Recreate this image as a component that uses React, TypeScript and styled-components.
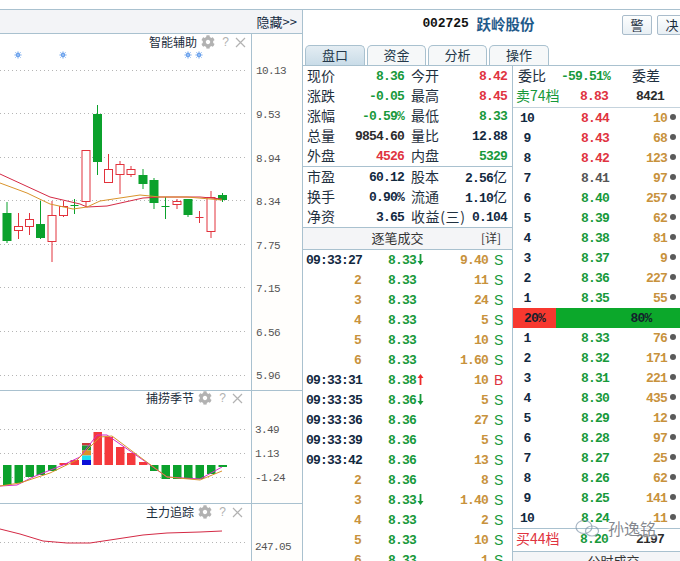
import React from "react";
import styled, { createGlobalStyle } from "styled-components";
import { FaCog } from "react-icons/fa";

const LINE = "#a9c1cf";
const GREEN = "#17993a";
const RED = "#e03340";
const ORANGE = "#c8923c";
const NAVY = "#12293f";
const CJK = `"Noto Sans CJK SC", "Liberation Sans", sans-serif`;
const NUM = `"Liberation Mono", "DejaVu Sans Mono", monospace`;

const tones: Record<string, string> = { green: GREEN, red: RED, orange: ORANGE, navy: NAVY, grey: "#555", dark: "#2b2b2b" };
type Tone = keyof typeof tones;

const GlobalStyle = createGlobalStyle`
  html, body { margin: 0; padding: 0; background: #fff; overflow: hidden; }
`;

const Page = styled.div`
  width: 680px;
  height: 561px;
  padding-top: 9px;
  box-sizing: border-box;
  overflow: hidden;
  position: relative;
  background: #fff;
  font-family: ${CJK};
  color: ${NAVY};
`;

const Frame = styled.div`
  display: flex;
  height: 552px;
  border-top: 1px solid ${LINE};
`;

const ChartColumn = styled.div`
  width: 302px;
  flex: none;
  display: flex;
  flex-direction: column;
`;

const Toolbar = styled.div`
  height: 23px;
  flex: none;
  display: flex;
  align-items: center;
  justify-content: flex-end;
  padding-right: 5px;
  background: #f3f4f7;
  border-bottom: 1px solid ${LINE};
  font-size: 13px;
  line-height: 23px;
`;

const Pane = styled.div<{ $height: number }>`
  height: ${({ $height }) => $height}px;
  flex: none;
  display: flex;
  border-bottom: 1px solid ${LINE};
  &:last-child { border-bottom: none; }
`;

const Canvas = styled.div`
  width: 251px;
  flex: none;
  position: relative;
  svg { display: block; }
`;

const Gutter = styled.div`
  flex: 1;
  position: relative;
  border-left: 1px solid ${LINE};
  background: #fffefc;
`;

const AxisLabel = styled.span<{ $top: number; $left: number }>`
  position: absolute;
  top: ${({ $top }) => $top}px;
  left: ${({ $left }) => $left}px;
  font: 11px/14px ${NUM};
  letter-spacing: -0.6px;
  color: #555;
`;

const PaneTitle = styled.div<{ $right: number; $top: number }>`
  position: absolute;
  top: ${({ $top }) => $top}px;
  right: ${({ $right }) => $right}px;
  display: flex;
  align-items: center;
  height: 16px;
  font-size: 12px;
  line-height: 16px;
  color: #1a2c3c;
`;

const PaneIcons = styled.span`
  display: flex;
  align-items: center;
  margin-left: 4px;
  gap: 5px;
  color: #b2b2b2;
`;

const Help = styled.span`
  width: 9px;
  text-align: center;
  font: 12px/16px "Liberation Sans", sans-serif;
  margin-left: 1px;
`;

const QuoteColumn = styled.div`
  flex: 1;
  min-width: 0;
  display: flex;
  flex-direction: column;
  border-left: 1px solid ${LINE};
`;

const QuoteHeader = styled.div`
  height: 35px;
  flex: none;
  display: flex;
  align-items: flex-start;
  white-space: nowrap;
`;

const StockTitle = styled.div`
  width: 319px;
  box-sizing: border-box;
  padding-left: 32px;
  flex: none;
  height: 28px;
  display: flex;
  align-items: center;
  justify-content: center;
  gap: 8px;
  font-weight: 700;
`;

const StockCode = styled.span`
  font: 700 13px/28px ${NUM};
  letter-spacing: -0.1px;
  color: #111;
`;

const StockName = styled.span`
  font-size: 14.5px;
  line-height: 28px;
  color: #1f5a8a;
`;

const HeaderButton = styled.button`
  width: 30px;
  height: 20px;
  flex: none;
  margin: 5px 5px 0 0;
  padding: 0;
  border: 1px solid #a9bccb;
  border-radius: 2px;
  background: linear-gradient(#fdfefe, #e8eff4);
  font: 13px/18px ${CJK};
  color: #1a2c3c;
`;

const Tabs = styled.div`
  height: 20px;
  flex: none;
  display: flex;
  align-items: flex-end;
  gap: 2px;
  padding-left: 2px;
  border-bottom: 1px solid ${LINE};
`;

const Tab = styled.div<{ $active?: boolean; $width: number }>`
  width: ${({ $width }) => $width}px;
  height: 20px;
  box-sizing: border-box;
  border: 1px solid ${LINE};
  border-bottom: none;
  border-radius: 5px 5px 0 0;
  background: ${({ $active }) => ($active ? "linear-gradient(#e4edf3, #c9dce8)" : "#f6f8f9")};
  text-align: center;
  font-size: 13px;
  line-height: 17px;
  color: #24384a;
`;

const QuoteBody = styled.div`
  flex: 1;
  min-height: 0;
  display: flex;
`;

const TradePanel = styled.div`
  width: 209px;
  flex: none;
  display: flex;
  flex-direction: column;
  overflow: hidden;
  border-right: 1px solid ${LINE};
`;

const StatGroup = styled.div`
  flex: none;
  border-bottom: 1px solid ${LINE};
`;

const StatRow = styled.div`
  display: grid;
  grid-template-columns: 97px 96px;
  column-gap: 7px;
  height: 20px;
  padding-left: 4px;
`;

const StatCell = styled.div`
  display: flex;
  justify-content: space-between;
  white-space: nowrap;
`;

const Label = styled.span`
  font-size: 14px;
  line-height: 18px;
  color: #1f3040;
`;

const WideLabel = styled(Label)`
  letter-spacing: 0.6px;
`;

const Num = styled.span<{ $tone?: Tone }>`
  font: 700 13px/21px ${NUM};
  letter-spacing: -0.8px;
  color: ${({ $tone = "navy" }) => tones[$tone]};
`;

const Unit = styled.span`
  font: 400 14px/18px ${CJK};
  letter-spacing: 0;
`;

const SectionBar = styled.div`
  height: 22px;
  flex: none;
  box-sizing: border-box;
  position: relative;
  display: flex;
  justify-content: center;
  padding-right: 20px;
  background: #f4f5f7;
  border-bottom: 1px solid ${LINE};
  font-size: 13px;
  line-height: 19px;
  color: #333;
`;

const DetailLink = styled.span`
  position: absolute;
  right: 11px;
  top: 0;
  font-size: 12px;
`;

const TradeRow = styled.div`
  display: grid;
  grid-template-columns: 55px 54px 15px 58px 1fr;
  height: 20px;
  flex: none;
  padding-left: 3px;
`;

const TradeTime = styled(Num)`
  text-align: right;
`;

const TradePrice = styled(Num)`
  padding-left: 27px;
`;

const TradeVolume = styled(Num)`
  text-align: right;
`;

const ArrowCell = styled.span`
  display: flex;
  align-items: center;
  padding: 0 0 2px 2px;
`;

const Flag = styled.span<{ $tone: Tone }>`
  padding-left: 6px;
  font: 400 14px/20px "Liberation Sans", sans-serif;
  color: ${({ $tone }) => tones[$tone]};
`;

const BookPanel = styled.div`
  flex: 1;
  min-width: 0;
  display: flex;
  flex-direction: column;
  overflow: hidden;
`;

const BookSummary = styled.div<{ $columns: string }>`
  display: grid;
  grid-template-columns: ${({ $columns }) => $columns};
  height: 20px;
  flex: none;
  white-space: nowrap;
`;

const LevelName = styled.span<{ $tone: Tone }>`
  font-size: 14px;
  line-height: 18px;
  padding-left: 3px;
  color: ${({ $tone }) => tones[$tone]};
`;

const SummaryLabel = styled(Label)`
  padding-left: 5px;
`;

const BookDivider = styled.div`
  height: 1px;
  flex: none;
  margin-top: 1px;
  background: #c5d3dd;
`;

const BookRow = styled.div`
  display: grid;
  grid-template-columns: 28px 68px 58px 12px;
  height: 20px;
  flex: none;
`;

const LevelNo = styled(Num)`
  text-align: center;
`;

const LevelPrice = styled(Num)`
  padding-left: 40px;
`;

const LevelVolume = styled(Num)`
  text-align: right;
`;

const Dot = styled.span`
  display: block;
  width: 6px;
  height: 6px;
  margin: 6px 0 0 3px;
  border-radius: 50%;
  background: #5a5a5a;
`;

const RatioBar = styled.div`
  height: 20px;
  flex: none;
  display: flex;
  font: 700 13px/21px ${NUM};
  letter-spacing: -0.8px;
  color: #14202c;
`;

const RatioPart = styled.div<{ $color: string; $grow: boolean }>`
  width: ${({ $grow }) => ($grow ? "auto" : "43px")};
  flex: ${({ $grow }) => ($grow ? 1 : "none")};
  padding-left: ${({ $grow }) => ($grow ? "46px" : "0")};
  text-align: center;
  background: ${({ $color }) => $color};
`;

const BidSummaryWrap = styled.div`
  height: 22px;
  flex: none;
  border-top: 1px solid ${LINE};
  border-bottom: 1px solid ${LINE};
`;

const FooterBar = styled.div`
  flex: 1;
  background: #f4f5f7;
  padding-left: 34px;
  text-align: center;
  font-size: 13px;
  line-height: 18px;
  color: #333;
  white-space: nowrap;
`;

const Watermark = styled.div`
  position: absolute;
  left: 574px;
  top: 518px;
  display: flex;
  align-items: center;
  gap: 8px;
  font-size: 16px;
  line-height: 20px;
  color: rgba(90, 95, 105, 0.75);
  text-shadow: 0 0 3px #fff, 0 0 3px #fff, 0 0 4px #fff;
`;

type Candle = [number, number, number, number, number, "g" | "r"];
const candles: Candle[] = [
  [7, 202, 243, 213, 240, "g"], [18.5, 213, 239, 226, 230, "r"], [29.5, 213, 235, 219, 226, "r"],
  [40.5, 201, 239, 224, 237, "g"], [52, 201, 262, 215, 241, "r"], [63.5, 201, 217, 206, 215, "r"],
  [74.5, 199, 214, 205, 205, "g"], [86, 150, 207, 150, 201, "r"], [97.5, 105, 175, 114, 161, "g"],
  [108.5, 154, 183, 169, 182, "r"], [120, 161, 194, 164, 174, "r"], [131, 166, 177, 169, 174, "r"],
  [143, 169, 189, 175, 183, "g"], [154, 178, 209, 180, 202, "g"], [165.5, 197, 219, 206, 206, "g"],
  [177, 199, 209, 201, 204, "r"], [188, 199, 217, 199, 214, "g"], [199.5, 211, 223, 217, 217, "r"],
  [211, 191, 238, 197, 231, "r"], [222.5, 193, 202, 195, 199, "g"],
];

const macdBars: [number, number, number][] = [
  [7, 465, 485], [18.5, 465, 483], [29.5, 465, 477], [40.5, 465, 475], [52, 465, 471], [63.5, 463, 465],
  [74.5, 460, 465], [97.5, 432, 465], [108.5, 437, 465], [120, 447, 465], [131, 453, 465], [143, 462, 465],
  [154, 465, 471], [165.5, 465, 479], [177, 465, 479], [188, 465, 479], [199.5, 465, 479], [211, 465, 474],
  [222.5, 465, 467],
];

const stackedBar = [
  ["#c93a3a", 443, 2.5], ["#17993a", 445.5, 5], ["#d9902a", 450.5, 5], ["#19e0f0", 455.5, 4.5], ["#0a10d8", 460, 5],
] as const;

const stars = [18, 63, 188, 199];
const mainGrid = [70, 113, 157, 200, 244, 287, 331, 375];

const GridLines = ({ ys }: { ys: number[] }) => (
  <>
    {ys.map((y) => (
      <line key={y} x1={0} x2={247} y1={y + 0.5} y2={y + 0.5} stroke="#b5b5b5" strokeDasharray="1 3" />
    ))}
  </>
);

const CloseGlyph = () => (
  <svg width="11" height="11" viewBox="0 0 11 11">
    <path d="M1 1 L10 10 M10 1 L1 10" stroke="#b2b2b2" strokeWidth="1.2" fill="none" />
  </svg>
);

const TitleBlock = ({ name, right, top = 0 }: { name: string; right: number; top?: number }) => (
  <PaneTitle $right={right} $top={top}>
    {name}
    <PaneIcons>
      <FaCog size={14} />
      <Help>?</Help>
      <CloseGlyph />
    </PaneIcons>
  </PaneTitle>
);

const Arrow = ({ up }: { up?: boolean }) => (
  <svg width="7" height="11" viewBox="0 0 7 11">
    {up ? (
      <path d="M3.5 0 L6.5 4 L4.4 4 L4.4 11 L2.6 11 L2.6 4 L0.5 4 Z" fill="#ee2b2b" />
    ) : (
      <path d="M3.5 11 L6.5 7 L4.4 7 L4.4 0 L2.6 0 L2.6 7 L0.5 7 Z" fill={GREEN} />
    )}
  </svg>
);

const statsA: [string, string, Tone, string, string, Tone][] = [
  ["现价", "8.36", "green", "今开", "8.42", "red"],
  ["涨跌", "-0.05", "green", "最高", "8.45", "red"],
  ["涨幅", "-0.59%", "green", "最低", "8.33", "green"],
  ["总量", "9854.60", "dark", "量比", "12.88", "navy"],
  ["外盘", "4526", "red", "内盘", "5329", "green"],
];

const trades: [string, string, "" | "up" | "down", string, "S" | "B"][] = [
  ["09:33:27", "8.33", "down", "9.40", "S"], ["2", "8.33", "", "11", "S"], ["3", "8.33", "", "24", "S"],
  ["4", "8.33", "", "5", "S"], ["5", "8.33", "", "10", "S"], ["6", "8.33", "", "1.60", "S"],
  ["09:33:31", "8.38", "up", "10", "B"], ["09:33:35", "8.36", "down", "5", "S"], ["09:33:36", "8.36", "", "27", "S"],
  ["09:33:39", "8.36", "", "5", "S"], ["09:33:42", "8.36", "", "13", "S"], ["2", "8.36", "", "8", "S"],
  ["3", "8.33", "down", "1.40", "S"], ["4", "8.33", "", "2", "S"], ["5", "8.33", "", "10", "S"], ["6", "8.33", "", "1", "S"],
];

const asks: [string, string, Tone, string][] = [
  ["10", "8.44", "red", "10"], ["9", "8.43", "red", "68"], ["8", "8.42", "red", "123"], ["7", "8.41", "grey", "97"],
  ["6", "8.40", "green", "257"], ["5", "8.39", "green", "62"], ["4", "8.38", "green", "81"], ["3", "8.37", "green", "9"],
  ["2", "8.36", "green", "227"], ["1", "8.35", "green", "55"],
];

const bids: [string, string, Tone, string][] = [
  ["1", "8.33", "green", "76"], ["2", "8.32", "green", "171"], ["3", "8.31", "green", "221"], ["4", "8.30", "green", "435"],
  ["5", "8.29", "green", "12"], ["6", "8.28", "green", "97"], ["7", "8.27", "green", "25"], ["8", "8.26", "green", "62"],
  ["9", "8.25", "green", "141"], ["10", "8.24", "green", "11"],
];

const BookLevels = ({ rows }: { rows: [string, string, Tone, string][] }) => (
  <>
    {rows.map(([no, price, tone, volume]) => (
      <BookRow key={no}>
        <LevelNo>{no}</LevelNo>
        <LevelPrice $tone={tone}>{price}</LevelPrice>
        <LevelVolume $tone="orange">{volume}</LevelVolume>
        <Dot />
      </BookRow>
    ))}
  </>
);

const SUMMARY_COLUMNS = "67px 56px 44px";

export default function App() {
  return (
    <Page>
      <GlobalStyle />
      <Frame>
        <ChartColumn>
          <Toolbar>隐藏&gt;&gt;</Toolbar>

          <Pane $height={356}>
            <Canvas>
              <svg width="251" height="356" viewBox="0 34 251 356">
                <GridLines ys={mainGrid} />
                {stars.map((x) => (
                  <g key={x}>
                    <circle cx={x} cy={55} r={2.4} fill="#4a8be8" />
                    <path d={`M${x - 4} 55 H${x + 4} M${x} 51 V59 M${x - 3} 52 L${x + 3} 58 M${x + 3} 52 L${x - 3} 58`} stroke="#9cc2f2" strokeWidth="0.8" />
                  </g>
                ))}
                {candles.map(([x, top, bottom, bodyTop, bodyBottom, kind]) => {
                  const color = kind === "g" ? "#0ba12c" : "#e2323c";
                  const hollow = kind === "r";
                  return (
                    <g key={x}>
                      <line x1={x} x2={x} y1={top} y2={bottom} stroke={color} />
                      {bodyTop === bodyBottom ? (
                        <line x1={x - 4} x2={x + 4} y1={bodyTop + 0.5} y2={bodyTop + 0.5} stroke={color} />
                      ) : (
                        <rect x={x - 4} y={bodyTop + 0.5} width={8} height={bodyBottom - bodyTop} fill={hollow ? "#fff" : color} stroke={color} />
                      )}
                    </g>
                  );
                })}
                <polyline points="0,174 50,197 80,204 87,207 107,206 143,198 160,197 200,197 222,199" fill="none" stroke="#d42a45" />
                <polyline points="0,183 27,193 50,204 73,209 87,207 100,201 140,195 160,197 187,197 222,200" fill="none" stroke="#d9942c" />
              </svg>
              <TitleBlock name="智能辅助" right={5} />
            </Canvas>
            <Gutter>
              {[["10.13", 71], ["9.53", 115], ["8.94", 159], ["8.34", 202], ["7.75", 246], ["7.15", 289], ["6.56", 333], ["5.96", 376]].map(([text, y]) => (
                <AxisLabel key={text} $left={4} $top={(y as number) - 34 - 7}>{text}</AxisLabel>
              ))}
            </Gutter>
          </Pane>

          <Pane $height={112}>
            <Canvas>
              <svg width="251" height="112" viewBox="0 391 251 112">
                <GridLines ys={[429, 453, 477]} />
                {macdBars.map(([x, top, bottom]) => (
                  <rect key={x} x={x - 4} y={top} width={8.5} height={bottom - top} fill={bottom > 465 ? "#0ba12c" : "#f5393c"} />
                ))}
                {stackedBar.map(([color, y, h]) => (
                  <rect key={color} x={82} y={y} width={9} height={h} fill={color} />
                ))}
                <polyline points="0,486 17,485 33,477 63,465 80,457 97,435 107,435 143,460 167,477 200,479 222,467" fill="none" stroke="#d62ac8" />
                <polyline points="0,486 20,483 50,473 77,460 90,447 100,437 112,436 140,457 167,477 200,480 222,471" fill="none" stroke="#d9942c" />
              </svg>
              <TitleBlock name="捕捞季节" right={8} top={-1} />
            </Canvas>
            <Gutter>
              {[["3.49", 430], ["1.13", 454], ["-1.24", 478]].map(([text, y]) => (
                <AxisLabel key={text} $left={3} $top={(y as number) - 391 - 7}>{text}</AxisLabel>
              ))}
            </Gutter>
          </Pane>

          <Pane $height={57}>
            <Canvas>
              <svg width="251" height="57" viewBox="0 504 251 57">
                <GridLines ys={[542]} />
                <polyline points="0,529 20,534 43,541 67,543 90,543 110,540 143,535 167,533 200,532 222,531" fill="none" stroke="#d42a45" />
              </svg>
              <TitleBlock name="主力追踪" right={8} />
            </Canvas>
            <Gutter>
              <AxisLabel $left={3} $top={36}>247.05</AxisLabel>
            </Gutter>
          </Pane>
        </ChartColumn>

        <QuoteColumn>
          <QuoteHeader>
            <StockTitle>
              <StockCode>002725</StockCode>
              <StockName>跃岭股份</StockName>
            </StockTitle>
            <HeaderButton>警</HeaderButton>
            <HeaderButton>决</HeaderButton>
          </QuoteHeader>

          <Tabs>
            <Tab $active $width={60}>盘口</Tab>
            <Tab $width={59}>资金</Tab>
            <Tab $width={59}>分析</Tab>
            <Tab $width={60}>操作</Tab>
          </Tabs>

          <QuoteBody>
            <TradePanel>
              <StatGroup>
                {statsA.map(([la, va, ta, lb, vb, tb]) => (
                  <StatRow key={la}>
                    <StatCell><Label>{la}</Label><Num $tone={ta}>{va}</Num></StatCell>
                    <StatCell><Label>{lb}</Label><Num $tone={tb}>{vb}</Num></StatCell>
                  </StatRow>
                ))}
              </StatGroup>
              <StatGroup>
                <StatRow>
                  <StatCell><Label>市盈</Label><Num>60.12</Num></StatCell>
                  <StatCell><Label>股本</Label><Num>2.56<Unit>亿</Unit></Num></StatCell>
                </StatRow>
                <StatRow>
                  <StatCell><Label>换手</Label><Num>0.90%</Num></StatCell>
                  <StatCell><Label>流通</Label><Num>1.10<Unit>亿</Unit></Num></StatCell>
                </StatRow>
                <StatRow>
                  <StatCell><Label>净资</Label><Num>3.65</Num></StatCell>
                  <StatCell><WideLabel>收益(三)</WideLabel><Num>0.104</Num></StatCell>
                </StatRow>
              </StatGroup>
              <SectionBar>
                逐笔成交
                <DetailLink>[详]</DetailLink>
              </SectionBar>
              {trades.map(([time, price, dir, volume, flag], i) => (
                <TradeRow key={i}>
                  <TradeTime $tone={time.length > 2 ? "navy" : "orange"}>{time}</TradeTime>
                  <TradePrice $tone="green">{price}</TradePrice>
                  <ArrowCell>{dir && <Arrow up={dir === "up"} />}</ArrowCell>
                  <TradeVolume $tone="orange">{volume}</TradeVolume>
                  <Flag $tone={flag === "B" ? "red" : "green"}>{flag}</Flag>
                </TradeRow>
              ))}
            </TradePanel>

            <BookPanel>
              <BookSummary $columns="48px 71px 48px">
                <SummaryLabel>委比</SummaryLabel>
                <Num $tone="green">-59.51%</Num>
                <Label>委差</Label>
              </BookSummary>
              <BookSummary $columns={SUMMARY_COLUMNS}>
                <LevelName $tone="green">卖74档</LevelName>
                <Num $tone="red">8.83</Num>
                <Num $tone="dark">8421</Num>
              </BookSummary>
              <BookDivider />
              <BookLevels rows={asks} />
              <RatioBar>
                <RatioPart $color="#f7382f" $grow={false}>20%</RatioPart>
                <RatioPart $color="#0ca82b" $grow>80%</RatioPart>
              </RatioBar>
              <BookLevels rows={bids} />
              <BidSummaryWrap>
                <BookSummary $columns={SUMMARY_COLUMNS}>
                  <LevelName $tone="red">买44档</LevelName>
                  <Num $tone="green">8.20</Num>
                  <Num $tone="dark">2197</Num>
                </BookSummary>
              </BidSummaryWrap>
              <FooterBar>公时成交</FooterBar>
            </BookPanel>
          </QuoteBody>
        </QuoteColumn>
      </Frame>

      <Watermark>
        <svg width="26" height="20" viewBox="0 0 26 20" fill="none" stroke="rgba(130,150,170,0.7)" strokeWidth="1.2">
          <ellipse cx="10" cy="9" rx="8" ry="6.5" />
          <ellipse cx="18" cy="13" rx="6.5" ry="5" />
        </svg>
        <span>孙逸铭</span>
      </Watermark>
    </Page>
  );
}
